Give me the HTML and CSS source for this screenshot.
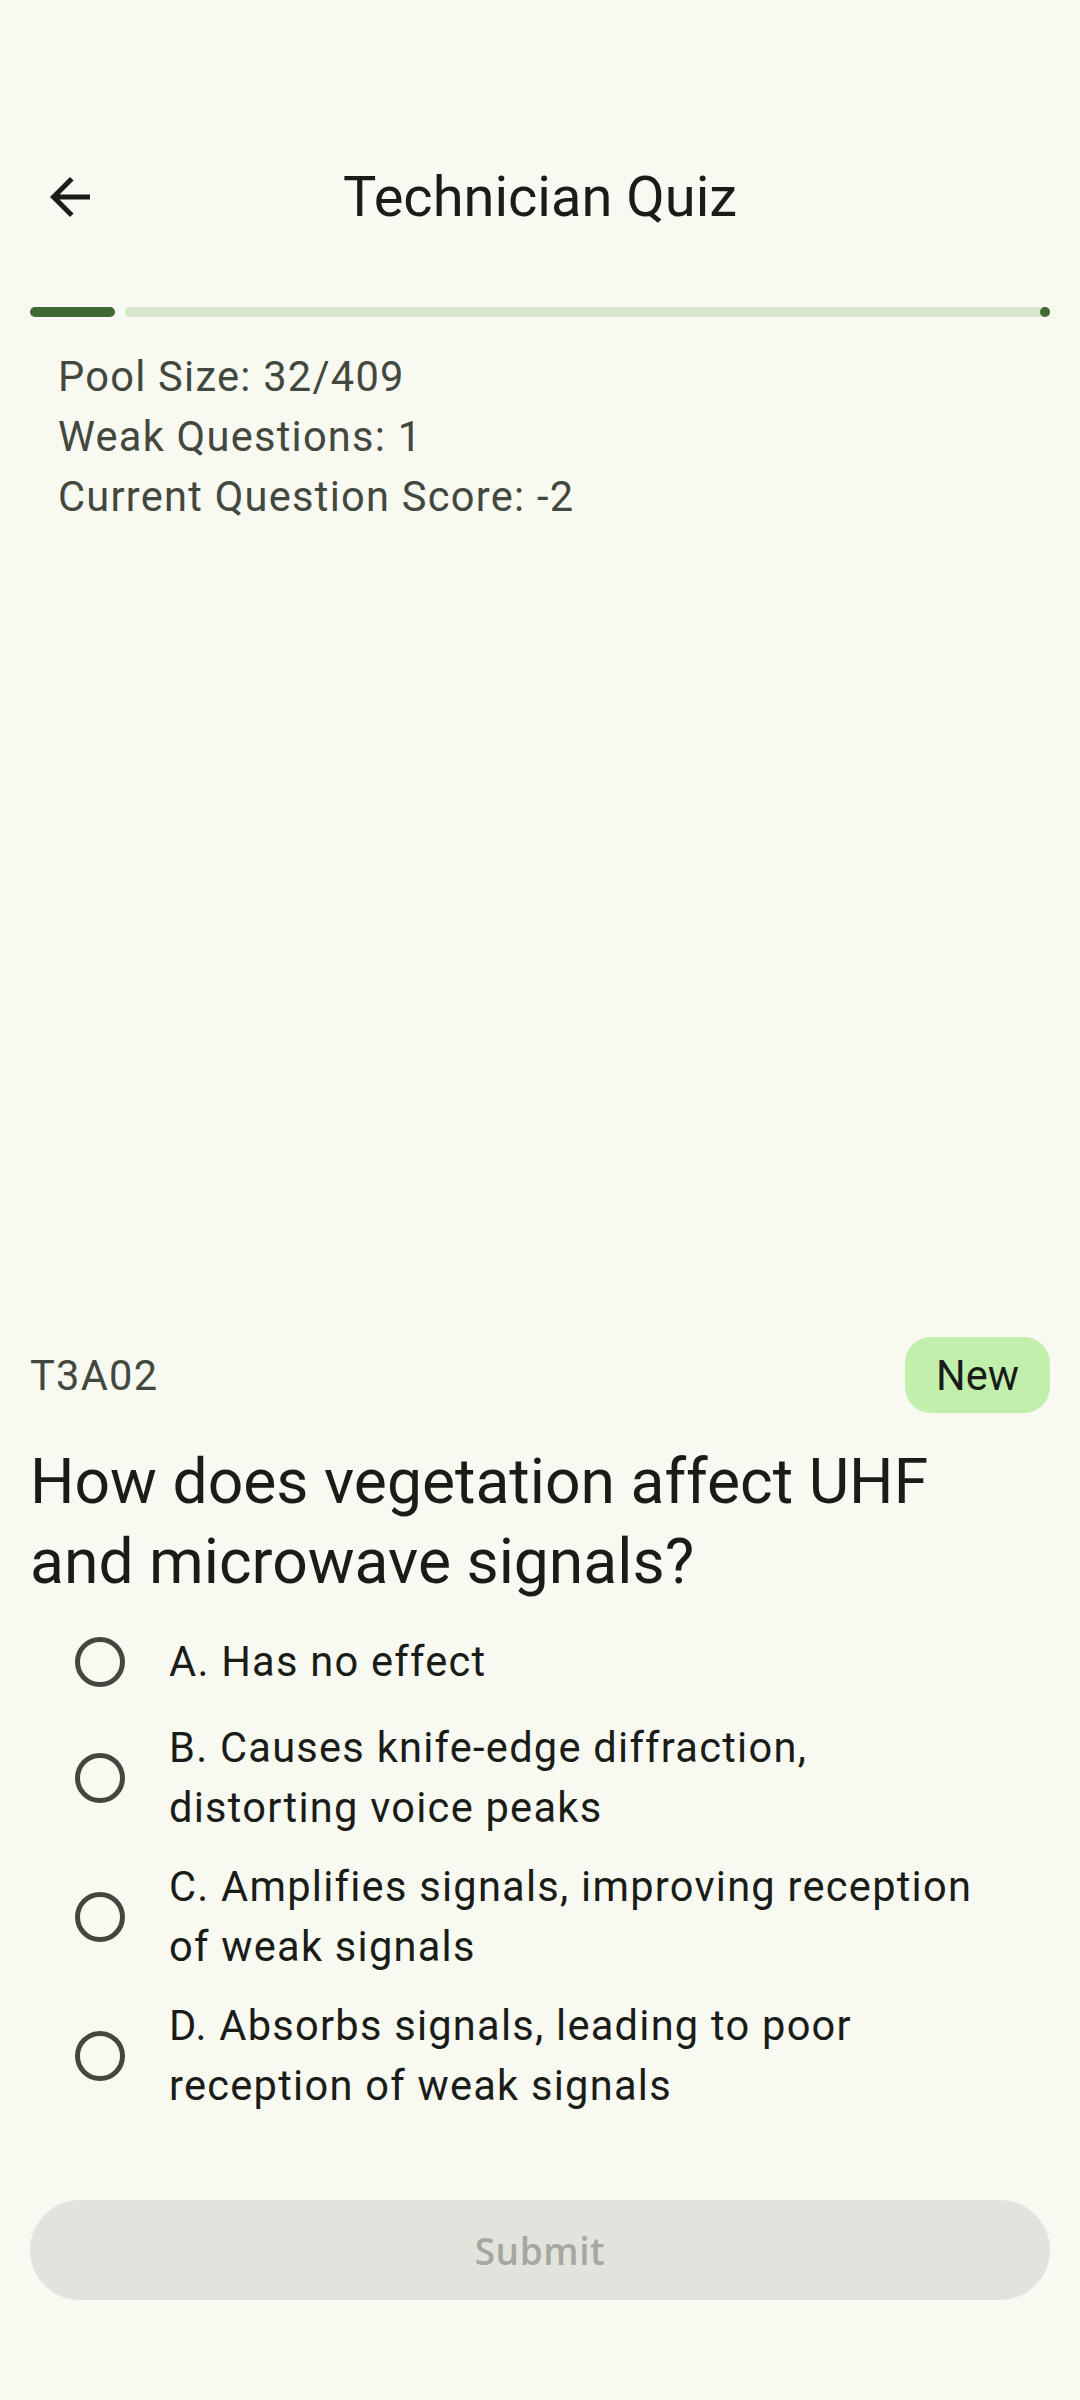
FILE: index.html
```html
<!DOCTYPE html>
<html lang="en">
<head>
<meta charset="utf-8">
<title>Technician Quiz</title>
<link rel="stylesheet" href="styles.css">
</head>
<body>
<div class="screen">
  <header class="appbar">
    <button class="back" aria-label="Back">
      <svg viewBox="0 0 24 24" width="60" height="60"><path d="M20 11H7.83l5.59-5.59L12 4l-8 8 8 8 1.41-1.41L7.83 13H20v-2z" fill="#1a1c18"/></svg>
    </button>
    <h1 class="title">Technician Quiz</h1>
  </header>

  <div class="progress">
    <div class="progress-active" style="width:85px"></div>
    <div class="progress-track"><span class="stop"></span></div>
  </div>

  <div class="stats">
    <p>Pool Size: 32/409</p>
    <p>Weak Questions: 1</p>
    <p>Current Question Score: -2</p>
  </div>

  <div class="spacer"></div>

  <section class="question">
    <div class="meta">
      <span class="qid">T3A02</span>
      <span class="chip">New</span>
    </div>
    <h2 class="qtext">How does vegetation affect UHF and microwave signals?</h2>
    <div class="options">
      <label class="option single"><span class="radio"></span><span class="otext">A. Has no effect</span></label>
      <label class="option"><span class="radio"></span><span class="otext">B. Causes knife-edge diffraction, distorting voice peaks</span></label>
      <label class="option"><span class="radio"></span><span class="otext">C. Amplifies signals, improving reception of weak signals</span></label>
      <label class="option"><span class="radio"></span><span class="otext">D. Absorbs signals, leading to poor reception of weak signals</span></label>
    </div>
  </section>

  <button class="submit" disabled>Submit</button>
</div>
</body>
</html>
```

FILE: styles.css
```css
html, body {
  margin: 0;
  padding: 0;
  background: #f8f9f1;
}

body {
  font-family: Roboto, "Noto Sans", sans-serif;
  color: #1a1c18;
}

.screen {
  width: 1080px;
  height: 2400px;
  display: flex;
  flex-direction: column;
  box-sizing: border-box;
}

/* App bar */
.appbar {
  margin-top: 117px;
  height: 160px;
  display: grid;
  grid-template-columns: 1fr auto 1fr;
  align-items: center;
}

.back {
  justify-self: start;
  margin-left: 40px;
  padding: 0;
  border: 0;
  background: none;
  width: 60px;
  height: 60px;
  display: flex;
}

.title {
  margin: 0;
  font-size: 56px;
  font-weight: 400;
  line-height: 80px;
  color: #1a1c18;
}

/* Progress */
.progress {
  margin: 30px 30px 0;
  height: 10px;
  display: flex;
  gap: 10px;
}

.progress-active {
  height: 10px;
  border-radius: 5px;
  background: #426833;
}

.progress-track {
  flex: 1;
  height: 10px;
  border-radius: 5px;
  background: #d8e6cb;
  display: flex;
  justify-content: flex-end;
}

.stop {
  width: 10px;
  height: 10px;
  border-radius: 50%;
  background: #426833;
}

/* Stats */
.stats {
  margin: 30px 30px 0;
  padding-left: 28px;
}

.stats p {
  margin: 0;
  font-size: 41.6px;
  line-height: 60px;
  letter-spacing: 1.25px;
  color: #43483f;
}

.spacer {
  flex: 1;
}

/* Question */
.question {
  padding: 0 30px;
}

.meta {
  height: 76px;
  display: flex;
  align-items: center;
  justify-content: space-between;
}

.qid {
  font-size: 41.6px;
  letter-spacing: 1.25px;
  color: #43483f;
}

.chip {
  height: 76px;
  padding: 0 31px;
  border-radius: 26px;
  background: #c2f0ac;
  display: flex;
  align-items: center;
  font-size: 41.6px;
  color: #1a1c18;
  box-sizing: border-box;
}

.qtext {
  margin: 29px 0 0;
  padding-right: 40px;
  font-size: 62.4px;
  font-weight: 400;
  line-height: 80px;
  color: #1a1c18;
}

.options {
  margin-top: 23px;
  display: flex;
  flex-direction: column;
  gap: 19px;
}

.option {
  min-height: 74px;
  display: flex;
  align-items: center;
  gap: 44px;
  padding: 0 45px;
}

.radio {
  flex: none;
  width: 50px;
  height: 50px;
  border: 5px solid #43483f;
  border-radius: 50%;
  box-sizing: border-box;
}

.otext {
  font-size: 41.6px;
  line-height: 60px;
  letter-spacing: 1.25px;
  color: #1a1c18;
}

/* Submit */
.submit {
  margin: 84px 30px 100px;
  height: 100px;
  border: 0;
  border-radius: 50px;
  background: #e2e3dc;
  color: #a5a7a0;
  font-family: "Open Sans", Roboto, sans-serif;
  font-size: 37px;
  font-weight: 600;
  letter-spacing: 0.6px;
}
```
